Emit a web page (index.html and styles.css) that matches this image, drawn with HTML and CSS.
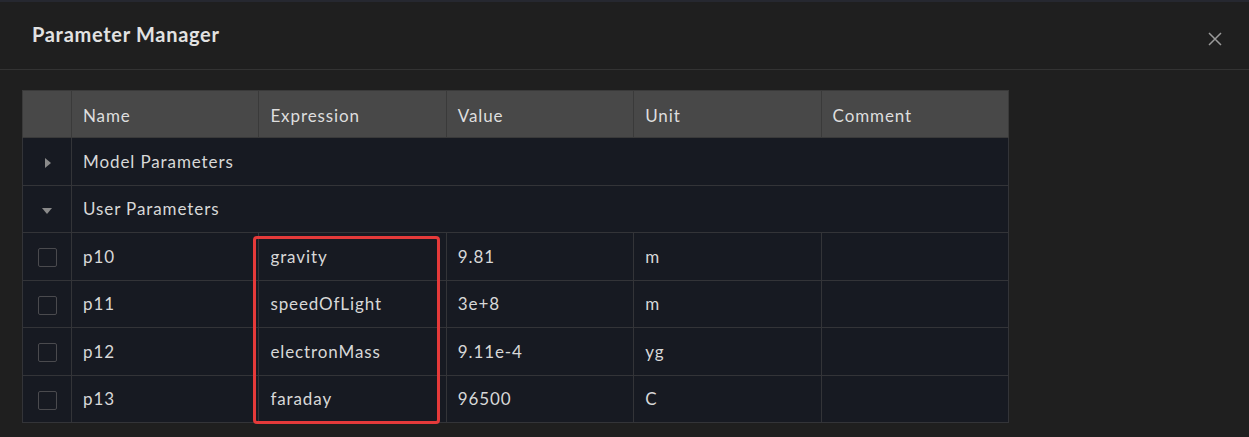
FILE: index.html
```html
<!DOCTYPE html>
<html lang="en">
<head>
<meta charset="utf-8">
<title>Parameter Manager</title>
<link rel="stylesheet" href="styles.css">
</head>
<body>
<div class="dialog">
  <div class="dialog-header">
    <h1 class="dialog-title">Parameter Manager</h1>
    <button class="close-btn" aria-label="Close">
      <svg width="14" height="14" viewBox="0 0 14 14"><path d="M1 1 L13 13 M13 1 L1 13" stroke="#9a9a9a" stroke-width="1.5" fill="none"/></svg>
    </button>
  </div>
  <div class="dialog-body">
    <div class="table-wrap">
      <table class="param-table">
        <colgroup>
          <col class="c-check"><col class="c-col"><col class="c-col"><col class="c-col"><col class="c-col"><col class="c-col">
        </colgroup>
        <thead>
          <tr><th></th><th>Name</th><th>Expression</th><th>Value</th><th>Unit</th><th>Comment</th></tr>
        </thead>
        <tbody>
          <tr class="group"><td class="caret-cell"><span class="caret right"></span></td><td colspan="5">Model Parameters</td></tr>
          <tr class="group"><td class="caret-cell"><span class="caret down"></span></td><td colspan="5">User Parameters</td></tr>
          <tr><td class="check-cell"><span class="checkbox"></span></td><td>p10</td><td>gravity</td><td>9.81</td><td>m</td><td></td></tr>
          <tr><td class="check-cell"><span class="checkbox"></span></td><td>p11</td><td>speedOfLight</td><td>3e+8</td><td>m</td><td></td></tr>
          <tr><td class="check-cell"><span class="checkbox"></span></td><td>p12</td><td>electronMass</td><td>9.11e-4</td><td>yg</td><td></td></tr>
          <tr><td class="check-cell"><span class="checkbox"></span></td><td>p13</td><td>faraday</td><td>96500</td><td>C</td><td></td></tr>
        </tbody>
      </table>
      <div class="highlight"></div>
    </div>
  </div>
</div>
</body>
</html>
```
FILE: styles.css
```css
html, body {
  margin: 0;
  padding: 0;
  background: #1f1f1f;
}
body {
  font-family: "Lato", "Open Sans", sans-serif;
  color: #d8d8d8;
  width: 1249px;
  height: 437px;
  overflow: hidden;
}
.dialog {
  background: #1f1f1f;
  border-top: 2px solid #262830;
  height: 435px;
}
.dialog-header {
  height: 67px;
  border-bottom: 1px solid #333333;
  display: flex;
  align-items: center;
  justify-content: space-between;
  padding: 0 26px 0 32px;
}
.dialog-title {
  margin: 0 0 4px 0;
  font-size: 20px;
  font-weight: 700;
  color: #e2e2e2;
  letter-spacing: 0.7px;
}
.close-btn {
  background: none;
  border: 0;
  padding: 0;
  width: 16px;
  height: 16px;
  display: flex;
  align-items: center;
  justify-content: center;
  margin-top: 7px;
}
.dialog-body {
  padding: 20px 0 0 22px;
}
.table-wrap {
  position: relative;
  width: 987px;
}
.param-table {
  border-collapse: collapse;
  table-layout: fixed;
  width: 987px;
  background: #171a22;
  border: 1px solid #353535;
  font-size: 17px;
  letter-spacing: 0.9px;
}
.c-check { width: 49px; }
.param-table th,
.param-table td {
  border: 1px solid #333438;
  padding: 0 11px;
  text-align: left;
  font-weight: 400;
  white-space: nowrap;
}
.param-table th {
  background: #484848;
  color: #dedede;
  height: 44px;
  padding-top: 2px;
  border-color: #3a3a3a;
}
.param-table td {
  height: 46.5px;
  color: #d8d8d8;
}
.caret-cell, .check-cell {
  text-align: center !important;
  padding: 0 !important;
}
.caret {
  display: inline-block;
  width: 0;
  height: 0;
  vertical-align: middle;
}
.caret.right {
  border-top: 5.5px solid transparent;
  border-bottom: 5.5px solid transparent;
  border-left: 6.5px solid #8a8a8a;
  margin-left: 2px;
}
.caret.down {
  border-left: 5.5px solid transparent;
  border-right: 5.5px solid transparent;
  border-top: 6px solid #8a8a8a;
}
.checkbox {
  display: inline-block;
  width: 17px;
  height: 17px;
  border: 1px solid #4a4a4e;
  border-radius: 2px;
  vertical-align: middle;
}
.highlight {
  position: absolute;
  left: 231px;
  top: 146px;
  width: 181px;
  height: 182px;
  border: 3px solid #e53a3a;
  border-radius: 4px;
  pointer-events: none;
}
```
